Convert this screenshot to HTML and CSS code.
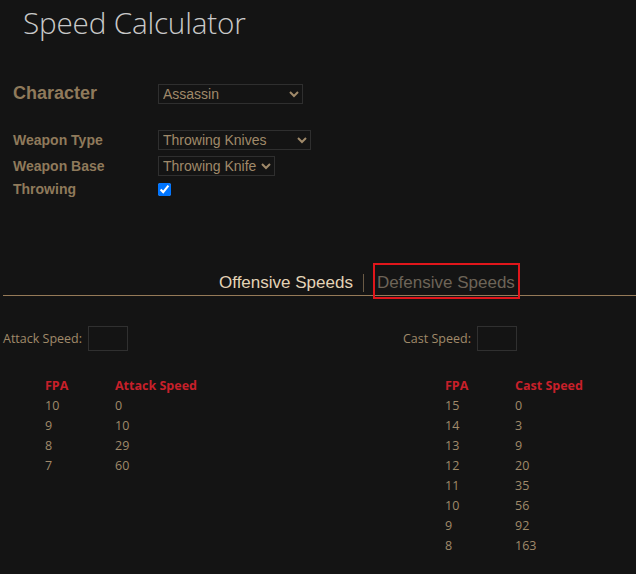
FILE: index.html
```html
<!DOCTYPE html>
<html>
<head>
<meta charset="utf-8">
<link rel="stylesheet" href="styles.css">
</head>
<body>
<h1 class="title">Speed Calculator</h1>

<div class="form">
  <div class="row row-main">
    <label class="lbl lbl-big">Character</label>
    <select class="sel sel-char"><option>Assassin</option></select>
  </div>
  <div class="row row-wt">
    <label class="lbl">Weapon Type</label>
    <select class="sel sel-wt"><option>Throwing Knives</option></select>
  </div>
  <div class="row row-wb">
    <label class="lbl">Weapon Base</label>
    <select class="sel sel-wb"><option>Throwing Knife</option></select>
  </div>
  <div class="row row-th">
    <label class="lbl">Throwing</label>
    <input type="checkbox" class="chk" checked>
  </div>
</div>

<div class="tabs">
  <span class="tab tab-active">Offensive Speeds</span>
  <span class="tab-sep"></span>
  <span class="tab tab-inactive">Defensive Speeds</span>
</div>

<div class="speeds">
  <div class="col col-left">
    <div class="inrow"><span class="inlbl">Attack Speed:</span><input type="text" class="num"></div>
    <table class="tbl">
      <tr><th>FPA</th><th>Attack Speed</th></tr>
      <tr><td>10</td><td>0</td></tr>
      <tr><td>9</td><td>10</td></tr>
      <tr><td>8</td><td>29</td></tr>
      <tr><td>7</td><td>60</td></tr>
    </table>
  </div>
  <div class="col col-right">
    <div class="inrow"><span class="inlbl">Cast Speed:</span><input type="text" class="num"></div>
    <table class="tbl">
      <tr><th>FPA</th><th>Cast Speed</th></tr>
      <tr><td>15</td><td>0</td></tr>
      <tr><td>14</td><td>3</td></tr>
      <tr><td>13</td><td>9</td></tr>
      <tr><td>12</td><td>20</td></tr>
      <tr><td>11</td><td>35</td></tr>
      <tr><td>10</td><td>56</td></tr>
      <tr><td>9</td><td>92</td></tr>
      <tr><td>8</td><td>163</td></tr>
    </table>
  </div>
</div>
</body>
</html>
```

FILE: styles.css
```css
html, body {
  margin: 0;
  padding: 0;
  background: #141414;
}
body {
  width: 636px;
  height: 574px;
  overflow: hidden;
  font-family: "Open Sans", sans-serif;
  color: #a08a6a;
}
.title {
  margin: 0;
  padding: 4px 0 0 23px;
  font-family: "Open Sans", sans-serif;
  font-weight: 300;
  font-size: 29.7px;
  line-height: 38px;
  color: #c9c9c9;
  letter-spacing: -0.2px;
}
.form {
  padding: 41px 0 0 13px;
  display: flex;
  flex-direction: column;
}
.row {
  display: grid;
  grid-template-columns: 145px auto;
  align-items: center;
  justify-items: start;
}
.row-main { height: 20px; margin-bottom: 27px; }
.row-wt { height: 20px; margin-bottom: 6px; }
.row-wb { height: 20px; margin-bottom: 3px; }
.row-th { height: 20px; }
.lbl {
  font-family: "Liberation Sans", Arial, sans-serif;
  font-weight: bold;
  font-size: 14px;
  color: #8f7a5b;
}
.lbl-big { font-size: 18px; }
.sel {
  font-family: "Liberation Sans", Arial, sans-serif;
  font-size: 14px;
  height: 20px;
  padding: 0;
  background: #141414;
  color: #a08a6a;
  border: 1px solid #2f2f2f;
  border-radius: 0;
  color-scheme: dark;
}
.sel-char { width: 145px; }
.sel-wt { width: 153px; }
.sel-wb { width: 117px; }
.chk {
  margin: 0;
  width: 13px;
  height: 13px;
}
.tabs {
  margin-top: 71px;
  height: 26px;
  border-bottom: 1px solid #957a58;
  margin-left: 3px;
  display: flex;
  align-items: center;
  padding-left: 216px;
  box-sizing: border-box;
  font-family: "Liberation Sans", Arial, sans-serif;
  font-size: 17px;
}
.tab { line-height: 20px; }
.tab-active { color: #e3d3b6; }
.tab-sep {
  width: 1px;
  height: 18px;
  background: #6a5a45;
  margin: 0 10px;
}
.tab-inactive {
  color: #6d6458;
  outline: 2px solid #e0161b;
  outline-offset: 0;
  padding: 8px 3px 4px 2px;
  margin-top: -4px;
  margin-left: 1px;
}
.speeds {
  display: flex;
  justify-content: space-between;
  padding: 30px 0 0 3px;
  font-size: 12.5px;
}
.col-right { width: 233px; }
.inrow {
  display: flex;
  align-items: center;
  height: 25px;
}
.inlbl { margin-right: 6px; }
.num {
  width: 40px;
  height: 25px;
  box-sizing: border-box;
  background: #141414;
  border: 1px solid #303030;
  margin: 0;
}
.tbl {
  margin: 24px 0 0 38px;
  border-collapse: collapse;
}
.tbl th, .tbl td {
  text-align: left;
  padding: 0 4px;
  height: 20px;
  font-size: 12.5px;
}
.tbl th {
  color: #c7202a;
  font-weight: bold;
}
.tbl th:first-child, .tbl td:first-child { width: 62px; }
```
